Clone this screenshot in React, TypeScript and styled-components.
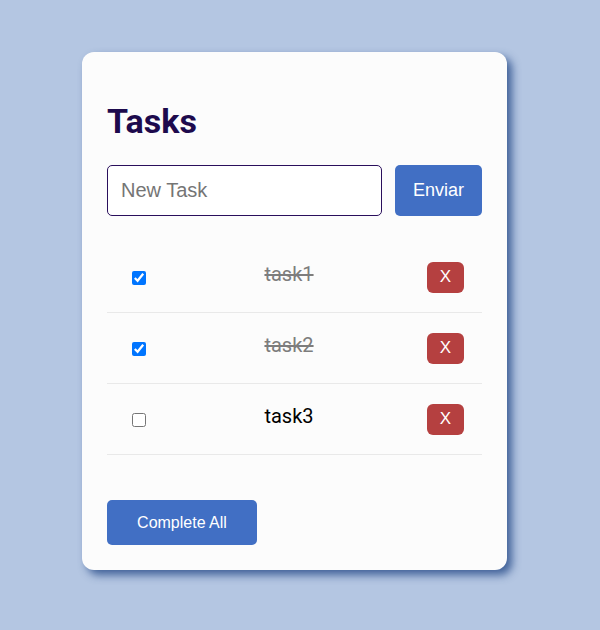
import React, { useState } from "react";
import styled, { createGlobalStyle } from "styled-components";

const Global = createGlobalStyle`
  html, body { margin: 0; padding: 0; background: #b4c6e2; }
  body { font-family: "Liberation Sans", Arial, sans-serif; }
`;

const Page = styled.div`
  display: flex;
  justify-content: center;
  align-items: flex-start;
  padding: 52px 11px 0 0;
  min-height: 630px;
  box-sizing: border-box;
`;

const Card = styled.div`
  width: 425px;
  box-sizing: border-box;
  padding: 25px;
  background: #fcfcfc;
  border-radius: 12px;
  box-shadow: 5px 5px 8px rgba(45, 80, 140, 0.85);
`;

const Title = styled.h1`
  margin: 24px 0 0;
  font-family: Roboto, "Liberation Sans", sans-serif;
  font-weight: 700;
  font-size: 34px;
  line-height: 40px;
  color: #1d0a4d;
`;

const Form = styled.div`
  display: flex;
  gap: 13px;
  margin-top: 24px;
`;

const TextInput = styled.input`
  flex: 1;
  min-width: 0;
  height: 51px;
  box-sizing: border-box;
  border: 1px solid #2a0f5c;
  border-radius: 5px;
  padding: 0 13px;
  font-family: "Liberation Sans", Arial, sans-serif;
  font-size: 20px;
  color: #222;
  background: #fff;
  &::placeholder { color: #757575; }
  outline: none;
`;

const PrimaryButton = styled.button<{ $w: number; $h: number; $fs: number }>`
  width: ${(p) => p.$w}px;
  height: ${(p) => p.$h}px;
  border: none;
  border-radius: 5px;
  background: #416fc4;
  color: #fff;
  font-family: "Liberation Sans", Arial, sans-serif;
  font-size: ${(p) => p.$fs}px;
  padding: 0;
  cursor: pointer;
`;

const List = styled.div`
  margin-top: 26px;
`;

const Row = styled.div`
  display: grid;
  grid-template-columns: 62px 240px 73px;
  align-items: center;
  height: 71px;
  box-sizing: border-box;
  border-bottom: 1px solid #e9e9e9;
`;

const CheckCell = styled.div`
  display: flex;
  justify-content: center;
  padding: 1px 0 0 1px;
  input { margin: 0; width: 14px; height: 14px; }
`;

const TaskText = styled.span<{ $done: boolean }>`
  text-align: center;
  font-family: Roboto, "Liberation Sans", sans-serif;
  font-size: 20px;
  padding-bottom: 7px;
  color: ${(p) => (p.$done ? "#7d7d7d" : "#000")};
  text-decoration: ${(p) => (p.$done ? "line-through" : "none")};
`;

const DeleteCell = styled.div`
  display: flex;
  justify-content: center;
`;

const DeleteButton = styled.button`
  width: 37px;
  height: 31px;
  border: none;
  border-radius: 6px;
  background: #b54040;
  color: #fff;
  font-family: "Liberation Sans", Arial, sans-serif;
  font-size: 17px;
  padding: 0;
`;

const Footer = styled.div`
  margin-top: 45px;
`;

export default function App() {
  const [tasks, setTasks] = useState([
    { id: 1, text: "task1", done: true },
    { id: 2, text: "task2", done: true },
    { id: 3, text: "task3", done: false },
  ]);
  const toggle = (id: number) =>
    setTasks((t) => t.map((x) => (x.id === id ? { ...x, done: !x.done } : x)));
  return (
    <>
      <Global />
      <Page>
        <Card>
          <Title>Tasks</Title>
          <Form>
            <TextInput placeholder="New Task" />
            <PrimaryButton $w={87} $h={51} $fs={18}>Enviar</PrimaryButton>
          </Form>
          <List>
            {tasks.map((t) => (
              <Row key={t.id}>
                <CheckCell>
                  <input type="checkbox" checked={t.done} onChange={() => toggle(t.id)} />
                </CheckCell>
                <TaskText $done={t.done}>{t.text}</TaskText>
                <DeleteCell>
                  <DeleteButton>X</DeleteButton>
                </DeleteCell>
              </Row>
            ))}
          </List>
          <Footer>
            <PrimaryButton $w={150} $h={45} $fs={16}>Complete All</PrimaryButton>
          </Footer>
        </Card>
      </Page>
    </>
  );
}
